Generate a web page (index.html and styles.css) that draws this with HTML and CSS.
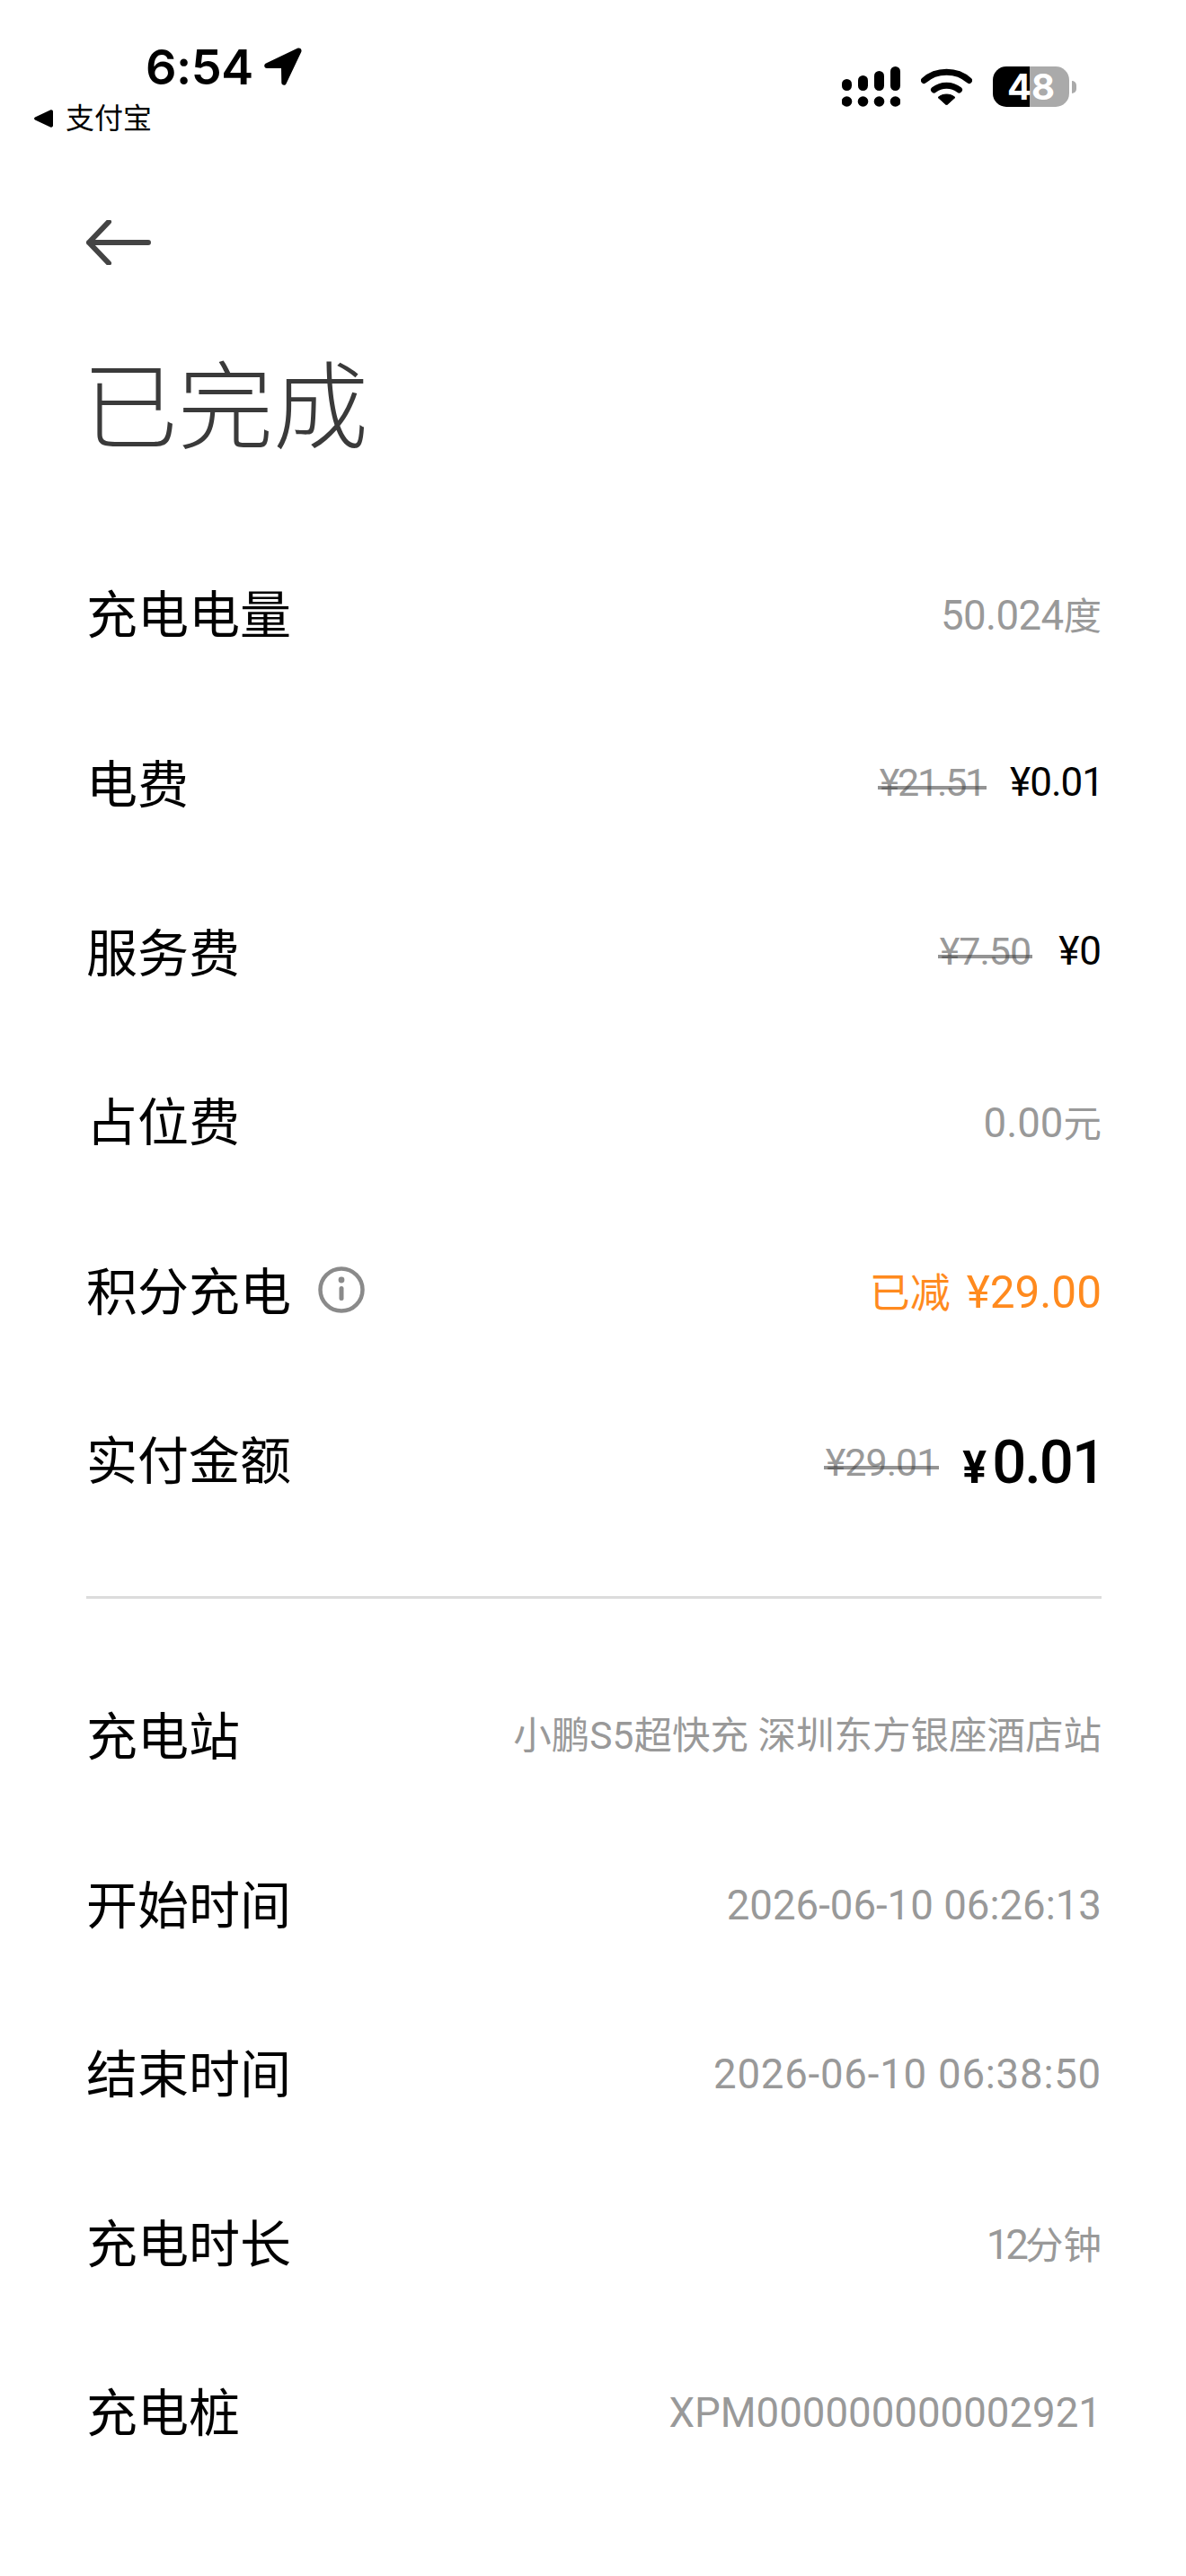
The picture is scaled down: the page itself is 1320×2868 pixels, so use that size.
FILE: index.html
```html
<!DOCTYPE html>
<html lang="zh-CN">
<head>
    <meta charset="UTF-8">
    <meta name="viewport" content="width=device-width, initial-scale=1.0">
    <title>已完成</title>
    <link rel="stylesheet" href="styles.css">
</head>
<body>
    <div class="status-bar">
        <div class="status-left">
            <div class="status-time">
                <span>6:54</span>
                <svg class="location-icon" viewBox="0 0 42 42"><path d="M37 .8 2 17.500c-3 1.500-2 5.500 1.200 5.500L19 23l.3 16c0 3 4 3.800 5.200 1.200L41.200 5c1.300-3-1.300-5.500-4.200-4.200Z"/></svg>
            </div>
            <div class="status-back">
                <svg class="back-triangle" viewBox="0 0 22 20"><path d="M1 8.500 18 .5c1.700-.7 3 .3 3 2v15c0 1.700-1.300 2.700-3 2L1 11.500c-1.300-.7-1.300-2.300 0-3Z"/></svg>
                <span>支付宝</span>
            </div>
        </div>
        <div class="status-right">
            <svg class="signal-icon" viewBox="0 0 65 45">
                <rect x="0" y="14" width="11" height="13" rx="5.500"/>
                <rect x="18" y="10" width="11" height="17" rx="5.500"/>
                <rect x="36" y="5" width="11" height="22" rx="5.500"/>
                <rect x="54" y="0" width="11" height="27" rx="5.500"/>
                <circle cx="5.500" cy="39" r="5.800"/>
                <circle cx="23.500" cy="39" r="5.800"/>
                <circle cx="41.500" cy="39" r="5.800"/>
                <circle cx="59.500" cy="39" r="5.800"/>
            </svg>
            <svg class="wifi-icon" viewBox="0 0 57 43">
                <path d="M3.500 15.500C17 3 40 3 53.500 15.500" fill="none" stroke="#000" stroke-width="7" stroke-linecap="round"/>
                <path d="M14.500 26c8-6.500 20-6.500 28 0" fill="none" stroke="#000" stroke-width="7" stroke-linecap="round"/>
                <path d="M28.500 43 19 34.500c5-4.600 14-4.600 19 0Z" stroke="#000" stroke-width="1" stroke-linejoin="round"/>
            </svg>
            <div class="battery">
                <div class="battery-body"><span>48</span></div>
                <div class="battery-nub"></div>
            </div>
        </div>
    </div>

    <div class="page-head">
        <svg class="back-arrow" viewBox="0 0 72 50"><path d="M3 25h66M25 2 3 25l22 23" fill="none" stroke="#444" stroke-width="6" stroke-linecap="round" stroke-linejoin="round"/></svg>
        <h1 class="page-title">已完成</h1>
    </div>

    <div class="detail-list">
        <div class="detail-row">
            <span class="row-label">充电电量</span>
            <span class="row-value value-unit value-tight">50.024<span class="value-cjk">度</span></span>
        </div>
        <div class="detail-row">
            <span class="row-label">电费</span>
            <span class="row-value row-value-price"><s class="old-price old-price-narrow">¥21.51</s><span class="now-price now-price-narrow">¥0.01</span></span>
        </div>
        <div class="detail-row">
            <span class="row-label">服务费</span>
            <span class="row-value row-value-price"><s class="old-price">¥7.50</s><span class="now-price">¥0</span></span>
        </div>
        <div class="detail-row">
            <span class="row-label">占位费</span>
            <span class="row-value value-unit">0.00<span class="value-cjk">元</span></span>
        </div>
        <div class="detail-row">
            <span class="row-label">积分充电
                <svg class="info-icon" viewBox="0 0 52 52">
                    <circle cx="26" cy="26" r="23.500" fill="none" stroke="#8a8a8a" stroke-width="4.500"/>
                    <circle cx="26" cy="15" r="3.400" fill="#8a8a8a"/>
                    <rect x="23.500" y="22" width="5" height="16" rx="2.500" fill="#8a8a8a"/>
                </svg>
            </span>
            <span class="row-value row-value-orange"><span class="orange-cjk">已减</span>¥29.00</span>
        </div>
        <div class="detail-row">
            <span class="row-label">实付金额</span>
            <span class="row-value row-value-total"><s class="old-price">¥29.01</s><span class="total-price"><span class="total-yen">¥</span>0.01</span></span>
        </div>
    </div>

    <div class="divider"></div>

    <div class="detail-list">
        <div class="detail-row">
            <span class="row-label">充电站</span>
            <span class="row-value value-cjk">小鹏S5超快充 深圳东方银座酒店站</span>
        </div>
        <div class="detail-row">
            <span class="row-label">开始时间</span>
            <span class="row-value">2026-06-10 06:26:13</span>
        </div>
        <div class="detail-row">
            <span class="row-label">结束时间</span>
            <span class="row-value value-wide">2026-06-10 06:38:50</span>
        </div>
        <div class="detail-row">
            <span class="row-label">充电时长</span>
            <span class="row-value value-unit value-short">12<span class="value-cjk">分钟</span></span>
        </div>
        <div class="detail-row">
            <span class="row-label">充电桩</span>
            <span class="row-value">XPM000000000002921</span>
        </div>
    </div>
</body>
</html>
```

FILE: styles.css
```css
* {
    margin: 0;
    padding: 0;
    box-sizing: border-box;
}

body {
    background: #fff;
    color: #000;
    font-family: Roboto, 'Noto Sans CJK SC', sans-serif;
    overflow: hidden;
}

/* status bar */
.status-bar {
    display: flex;
    justify-content: space-between;
    height: 200px;
    padding: 50px 122px 0 38px;
}

.status-time {
    display: flex;
    align-items: center;
    gap: 12px;
    margin-left: 124px;
    height: 50px;
    font-family: Inter, sans-serif;
    font-size: 54px;
    font-weight: 600;
    letter-spacing: -0.5px;
    line-height: 50px;
}

.location-icon {
    width: 42px;
    height: 42px;
    margin-top: -3px;
}

.status-back {
    display: flex;
    align-items: center;
    gap: 13px;
    margin-top: 17px;
    font-size: 32px;
    line-height: 30px;
}

.back-triangle {
    width: 22px;
    height: 20px;
}

.status-right {
    display: flex;
    align-items: flex-start;
    gap: 23px;
    padding-top: 24px;
}

.signal-icon {
    width: 65px;
    height: 45px;
}

.wifi-icon {
    width: 57px;
    height: 43px;
}

.battery {
    display: flex;
    align-items: center;
    gap: 3px;
}

.battery-body {
    width: 85px;
    height: 45px;
    border-radius: 15px;
    background: linear-gradient(to right, #000 48%, #aaa 48%);
    color: #fff;
    font-family: Inter, sans-serif;
    font-size: 40px;
    font-weight: 700;
    line-height: 45px;
    text-align: center;
}

.battery-nub {
    width: 5px;
    height: 14px;
    border-radius: 0 6px 6px 0;
    background: #aaa;
}

/* title */
.page-head {
    padding: 0 96px;
}

.back-arrow {
    display: block;
    width: 72px;
    height: 50px;
    margin-top: 45px;
}

.page-title {
    margin-top: 100px;
    margin-left: -4px;
    font-size: 106px;
    font-weight: 320;
    line-height: 120px;
    color: #3a3a3a;
}

/* rows */
.detail-list {
    padding: 0 94px 0 96px;
}

.page-head + .detail-list {
    margin-top: 71px;
}

.detail-row {
    display: flex;
    align-items: center;
    justify-content: space-between;
    height: 188.4px;
}

.row-label {
    display: flex;
    align-items: center;
    gap: 30px;
    font-size: 57px;
    font-weight: 440;
    color: #000;
}

.row-value {
    display: flex;
    align-items: baseline;
    padding-top: 9px;
    font-size: 45.6px;
    color: #999;
}

.value-cjk {
    font-size: 42.5px;
    letter-spacing: 0;
}

.row-value.value-cjk {
    padding-top: 0;
}

.row-value.value-unit {
    padding-top: 5px;
}

.value-tight {
    letter-spacing: -0.6px;
}

.value-wide {
    letter-spacing: 0.77px;
}

.value-short {
    letter-spacing: -4px;
}

.row-value-price,
.row-value-total {
    align-items: center;
}

.row-value-price {
    padding-top: 4px;
}

.row-value-total {
    padding-top: 11px;
}

.row-value-orange {
    padding-top: 6px;
    font-size: 49.5px;
    color: #ff8a1e;
}

.orange-cjk {
    margin-right: 18px;
    font-size: 45px;
}

.old-price {
    position: relative;
    font-size: 43px;
    letter-spacing: -1px;
    text-decoration: none;
    color: #999;
}

.old-price-narrow {
    letter-spacing: -2.2px;
}

.old-price::after {
    content: "";
    position: absolute;
    left: -2px;
    right: -2px;
    top: 58%;
    height: 4px;
    background: rgba(60, 60, 60, 0.55);
}

.now-price {
    margin-left: 31px;
    font-size: 44px;
    color: #000;
}

.now-price-narrow {
    margin-left: 28px;
    margin-right: -2px;
    letter-spacing: -1px;
}

.total-price {
    display: flex;
    align-items: baseline;
    margin-left: 28px;
    margin-right: -3px;
    font-size: 67px;
    font-weight: 500;
    letter-spacing: -2px;
    color: #000;
}

.total-yen {
    margin-right: 6px;
    font-size: 50px;
    font-weight: 700;
    letter-spacing: 0;
}

.info-icon {
    width: 52px;
    height: 52px;
    margin-top: 5px;
}

.divider {
    height: 3px;
    margin: 61px 94px 54px 96px;
    background: #dcdcdc;
}
```
